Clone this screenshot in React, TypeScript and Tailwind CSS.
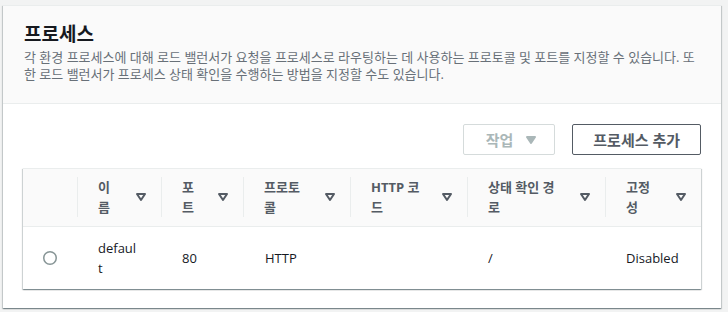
import React from "react";

const font = { fontFamily: '"Open Sans", "Noto Sans CJK KR", sans-serif' };

function Caret({ color = "#545b64", filled = true }: { color?: string; filled?: boolean }) {
  return (
    <svg width="16" height="16" viewBox="0 0 16 16" fill={filled ? color : "none"} stroke={color} strokeWidth="2" strokeLinejoin="round">
      <path d="M4 5h8l-4 6-4-6z" />
    </svg>
  );
}

const cols = [
  { label: "", w: 54, pr: "" },
  { label: "이름", w: 84, pr: "pr-[40px]" },
  { label: "포트", w: 82, pr: "pr-[40px]" },
  { label: "프로토콜", w: 107, pr: "pr-[40px]" },
  { label: "HTTP 코드", w: 117, pr: "pr-[40px]" },
  { label: "상태 확인 경로", w: 138, pr: "pr-[42px]" },
  { label: "고정성", w: 96, pr: "pr-[40px]" },
];

export default function App() {
  return (
    <div className="min-h-screen bg-[#f2f3f3] pt-[5px] pl-[3px]" style={font}>
      <div className="w-[718px] h-[303px] bg-white border-t border-[#eaeded] shadow-[0_1px_1px_0_rgba(0,28,36,0.3),1px_1px_1px_0_rgba(0,28,36,0.15),-1px_1px_1px_0_rgba(0,28,36,0.15)]">
        <div className="bg-[#fafafa] border-b border-[#eaeded] pl-[21px] pr-[20px] pt-[17px] pb-[20px]">
          <h2 className="text-[19px] font-bold leading-[22px] text-[#16191f]">프로세스</h2>
          <p className="mt-[4px] text-[13px] leading-[17px] text-[#687078]">
            각 환경 프로세스에 대해 로드 밸런서가 요청을 프로세스로 라우팅하는 데 사용하는 프로토콜 및 포트를 지정할 수 있습니다. 또한 로드 밸런서가 프로세스 상태 확인을 수행하는 방법을 지정할 수도 있습니다.
          </p>
        </div>
        <div className="px-[20px] pt-[20px]">
          <div className="flex justify-end gap-[17px]">
            <button
              disabled
              className="h-[31px] flex items-center border border-[#d5dbdb] rounded-[2px] bg-white pl-[22px] pr-[15px] text-[15px] font-bold leading-[20px] text-[#aab7b8]"
            >
              <span>작업</span>
              <span className="ml-[10px] flex">
                <Caret color="#aab7b8" />
              </span>
            </button>
            <button className="h-[31px] flex items-center border border-[#545b64] rounded-[2px] bg-white px-[20px] text-[15px] font-bold leading-[20px] text-[#545b64]">
              프로세스 추가
            </button>
          </div>
          <div className="mt-[13px] border-t border-[#eaeded] bg-white shadow-[0_1px_1px_0_rgba(0,28,36,0.3),1px_1px_1px_0_rgba(0,28,36,0.15),-1px_1px_1px_0_rgba(0,28,36,0.15)]">
            <table className="w-full table-fixed border-collapse">
              <colgroup>
                {cols.map((c, i) => (
                  <col key={i} style={{ width: c.w }} />
                ))}
              </colgroup>
              <thead>
                <tr className="bg-[#fafafa]">
                  {cols.map((c, i) => (
                    <th key={i} className="p-0 border-b border-[#eaeded] align-middle">
                      <div className="pt-[8px] pb-[9px]">
                        {i === 0 ? (
                          <div className="h-[40px]" />
                        ) : (
                          <div
                            className={`relative border-l border-[#eaeded] pl-[20px] ${c.pr} text-left text-[13px] font-bold leading-[20px] text-[#545b64]`}
                          >
                            {c.label}
                            <span className="absolute right-[12px] top-1/2 -translate-y-1/2 flex">
                              <Caret filled={false} />
                            </span>
                          </div>
                        )}
                      </div>
                    </th>
                  ))}
                </tr>
              </thead>
              <tbody>
                <tr className="text-[13px] leading-[20px] text-[#16191f]">
                  <td className="py-[11px] align-middle">
                    <div className="flex justify-center">
                      <svg width="16" height="16" viewBox="0 0 16 16">
                        <circle cx="8" cy="8" r="6.25" fill="white" stroke="#879596" strokeWidth="1.5" />
                      </svg>
                    </div>
                  </td>
                  <td className="py-[11px] pl-[21px] pr-[23px] align-middle break-all">default</td>
                  <td className="py-[11px] pl-[21px] pr-[23px] align-middle">80</td>
                  <td className="py-[11px] pl-[22px] pr-[23px] align-middle">HTTP</td>
                  <td className="py-[11px] pl-[21px] pr-[23px] align-middle"></td>
                  <td className="py-[11px] pl-[21px] pr-[23px] align-middle">/</td>
                  <td className="py-[11px] pl-[21px] pr-[10px] align-middle">Disabled</td>
                </tr>
              </tbody>
            </table>
          </div>
        </div>
      </div>
    </div>
  );
}
